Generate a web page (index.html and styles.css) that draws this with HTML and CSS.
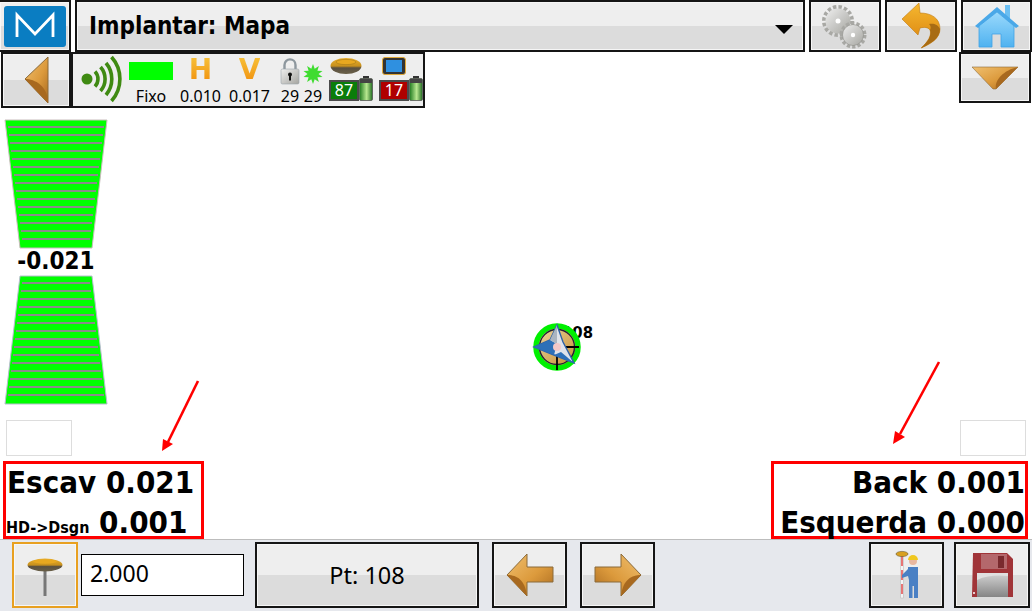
FILE: index.html
```html
<!DOCTYPE html>
<html lang="pt">
<head>
<meta charset="UTF-8">
<meta name="viewport" content="width=device-width, initial-scale=1.0">
<title>Implantar: Mapa</title>
<link rel="stylesheet" href="styles.css">
</head>
<body>

<!-- shared gradients -->
<svg class="defs" aria-hidden="true">
  <defs>
    <linearGradient id="gold" x1="0" y1="0" x2="1" y2="1">
      <stop offset="0" stop-color="#f0c070"/>
      <stop offset="0.55" stop-color="#dc9a3c"/>
      <stop offset="1" stop-color="#a8691f"/>
    </linearGradient>
    <linearGradient id="orange" x1="0" y1="0" x2="0" y2="1">
      <stop offset="0" stop-color="#f5b830"/>
      <stop offset="1" stop-color="#d97f0c"/>
    </linearGradient>
    <linearGradient id="sky" x1="0" y1="0" x2="0" y2="1">
      <stop offset="0" stop-color="#9ad9fc"/>
      <stop offset="1" stop-color="#4fb2f0"/>
    </linearGradient>
    <linearGradient id="steel" x1="0" y1="0" x2="1" y2="1">
      <stop offset="0" stop-color="#eeeeee"/>
      <stop offset="1" stop-color="#a5a5a0"/>
    </linearGradient>
    <linearGradient id="cell" x1="0" y1="0" x2="1" y2="0">
      <stop offset="0" stop-color="#1f7a1f"/>
      <stop offset="0.55" stop-color="#b8e890"/>
      <stop offset="1" stop-color="#1f6a1f"/>
    </linearGradient>
    <linearGradient id="dome" x1="0" y1="0" x2="0" y2="1">
      <stop offset="0" stop-color="#e8b030"/>
      <stop offset="0.5" stop-color="#c8901c"/>
      <stop offset="0.62" stop-color="#5a5040"/>
      <stop offset="1" stop-color="#6a6048"/>
    </linearGradient>
    <linearGradient id="face" x1="0" y1="0" x2="1" y2="1">
      <stop offset="0" stop-color="#f0d8a0"/>
      <stop offset="1" stop-color="#c08a30"/>
    </linearGradient>
    <linearGradient id="disk" x1="0" y1="0" x2="0" y2="1">
      <stop offset="0" stop-color="#d4d4d4"/>
      <stop offset="1" stop-color="#858585"/>
    </linearGradient>
    <g id="arrowShape">
      <path d="M1 22 L21 1 V14 H47 V29 H21 V43 Z" fill="url(#gold)" stroke="#8a6a3a"/>
      <path d="M1 22 C10 22 19 26 21 43 Z" fill="#a8691f"/>
    </g>
    <g id="gaugeRungs" stroke="#8a8a8a" stroke-width="2">
      <line x1="3" y1="7" x2="99" y2="7"/>
      <line x1="4" y1="15" x2="98" y2="15"/>
      <line x1="5" y1="23" x2="97" y2="23"/>
      <line x1="6" y1="31" x2="96" y2="31"/>
      <line x1="7" y1="39" x2="95" y2="39"/>
      <line x1="8" y1="47" x2="94" y2="47"/>
      <line x1="9" y1="55" x2="93" y2="55"/>
      <line x1="10" y1="63" x2="92" y2="63"/>
      <line x1="11" y1="71" x2="91" y2="71"/>
      <line x1="12" y1="79" x2="90" y2="79"/>
      <line x1="13" y1="87" x2="89" y2="87"/>
      <line x1="14" y1="95" x2="88" y2="95"/>
      <line x1="15" y1="103" x2="87" y2="103"/>
      <line x1="16" y1="111" x2="86" y2="111"/>
      <line x1="17" y1="119" x2="85" y2="119"/>
    </g>
    <g id="gaugeRungsLow" stroke="#8a8a8a" stroke-width="2">
      <line x1="17" y1="7" x2="85" y2="7"/>
      <line x1="16" y1="15" x2="86" y2="15"/>
      <line x1="15" y1="23" x2="87" y2="23"/>
      <line x1="14" y1="31" x2="88" y2="31"/>
      <line x1="13" y1="39" x2="89" y2="39"/>
      <line x1="12" y1="47" x2="90" y2="47"/>
      <line x1="11" y1="55" x2="91" y2="55"/>
      <line x1="10" y1="63" x2="92" y2="63"/>
      <line x1="9" y1="71" x2="93" y2="71"/>
      <line x1="8" y1="79" x2="94" y2="79"/>
      <line x1="7" y1="87" x2="95" y2="87"/>
      <line x1="6" y1="95" x2="96" y2="95"/>
      <line x1="5" y1="103" x2="97" y2="103"/>
      <line x1="4" y1="111" x2="98" y2="111"/>
      <line x1="3" y1="119" x2="99" y2="119"/>
    </g>
  </defs>
</svg>

<div class="app">

  <header class="top-row">
    <button class="btn btn-logo">
      <svg class="logo" width="62" height="41" viewBox="0 0 62 41">
        <rect width="62" height="41" rx="3" fill="#0a7dc2"/>
        <path d="M13 31 V9 L31 28 L49 9 V31" fill="none" stroke="#fff" stroke-width="2.8"/>
      </svg>
    </button>
    <div class="btn title-select">
      <span class="title-text">Implantar: Mapa</span>
      <span class="caret"></span>
    </div>
    <button class="btn btn-icon">
      <svg width="48" height="48" viewBox="0 0 48 48">
        <circle cx="17" cy="19" r="14" fill="none" stroke="#a8a8a4" stroke-width="4" stroke-dasharray="3.4 2.1"/>
        <circle cx="17" cy="19" r="12.5" fill="url(#steel)"/>
        <circle cx="17" cy="19" r="2.5" fill="#fff"/>
        <circle cx="32" cy="33" r="11.5" fill="none" stroke="#a8a8a4" stroke-width="4" stroke-dasharray="3.2 2"/>
        <circle cx="32" cy="33" r="10.5" fill="url(#steel)" stroke="#8d8d88" stroke-width="0.6"/>
        <circle cx="32" cy="33" r="2.2" fill="#fff"/>
      </svg>
    </button>
    <button class="btn btn-icon">
      <svg width="40" height="48" viewBox="0 0 40 48">
        <path d="M1 17 L18 1 L19 11 C30 11 39 16 39 27 C39 36 30 42 20 46 C27 40 31 33 29 28 C27 25 23 25 19 26 L17 33 Z" fill="url(#orange)" stroke="#c07a10" stroke-width="0.6"/>
        <path d="M29 28 C31 33 27 40 20 46 C30 42 39 36 39 27 C37 22 32 21 28 22 C30 24 30 26 29 28 Z" fill="#a86c14"/>
      </svg>
    </button>
    <button class="btn btn-icon btn-home">
      <svg width="44" height="44" viewBox="0 0 44 44">
        <path d="M30 1 H35 V16 H30 Z" fill="#6cbff2"/>
        <path d="M22 3 L44 22 L41 24 L22 8 L3 24 L0 22 Z" fill="#4aa8e8"/>
        <path d="M22 8 L39 22 V43 H26 V30 H17 V43 H4 V22 Z" fill="url(#sky)" stroke="#3fa2e6" stroke-width="0.8"/>
      </svg>
    </button>
  </header>

  <div class="status-row">
    <div class="status-left">
      <button class="btn btn-back">
        <svg width="26" height="48" viewBox="0 0 26 48">
          <path d="M2 23 L25 1 V47 Z" fill="url(#gold)" stroke="#8a6a3a"/>
          <path d="M2 23 C12 23 25 30 25 47 Z" fill="#a8691f"/>
        </svg>
      </button>
      <div class="status-bar">
        <svg class="signal" width="43" height="50" viewBox="0 0 43 50">
          <circle cx="7" cy="24" r="5.5" fill="#3f8a12"/>
          <g fill="none" stroke="#3f8a12" stroke-width="3.6">
            <path d="M15 16.5 A11 11 0 0 1 15 31.5"/>
            <path d="M20.5 12 A18 18 0 0 1 20.5 36"/>
            <path d="M26 8 A25 25 0 0 1 26 40"/>
            <path d="M31.5 2 A33 33 0 0 1 31.5 46"/>
          </g>
        </svg>
        <div class="stat stat-fix">
          <div class="stat-icon"><span class="fix-bar"></span></div>
          <span class="stat-label">Fixo</span>
        </div>
        <div class="stat stat-h">
          <div class="stat-icon"><span class="tol-letter">H</span></div>
          <span class="stat-label">0.010</span>
        </div>
        <div class="stat stat-v">
          <div class="stat-icon"><span class="tol-letter">V</span></div>
          <span class="stat-label">0.017</span>
        </div>
        <div class="stat stat-lock">
          <div class="stat-icon">
            <svg width="20" height="27" viewBox="0 0 20 27">
              <path d="M4.5 12 V7 C4.5 -0.5 15.5 -0.5 15.5 7 V12" fill="none" stroke="#8d979e" stroke-width="2.4"/>
              <rect x="1" y="11" width="18" height="15" rx="1.5" fill="url(#steel)" stroke="#9aa4ab" stroke-width="0.6"/>
              <circle cx="10" cy="16.5" r="2" fill="#111"/>
              <rect x="9" y="17" width="2" height="5.5" fill="#111"/>
            </svg>
          </div>
          <span class="stat-label">29</span>
        </div>
        <div class="stat stat-sat">
          <div class="stat-icon stat-icon-low">
            <svg width="20" height="20" viewBox="0 0 20 20">
              <polygon fill="#3fdc30" points="10,0 11.7,4.8 15.9,1.9 14.4,6.8 19.5,6.9 15.5,10 19.5,13.1 14.4,13.2 15.9,18.1 11.7,15.2 10,20 8.3,15.2 4.1,18.1 5.6,13.2 0.5,13.1 4.5,10 0.5,6.9 5.6,6.8 4.1,1.9 8.3,4.8"/>
            </svg>
          </div>
          <span class="stat-label">29</span>
        </div>

        <div class="power power-rover">
          <svg class="power-icon" width="32" height="18" viewBox="0 0 32 18">
            <ellipse cx="16" cy="9" rx="15.5" ry="8" fill="url(#dome)"/>
            <ellipse cx="16" cy="5" rx="10" ry="2.6" fill="#e8a820" stroke="#a87a18" stroke-width="0.6"/>
          </svg>
          <div class="power-row">
            <span class="badge badge-ok">87</span>
            <svg width="14" height="25" viewBox="0 0 14 25">
              <rect x="4" y="0" width="6" height="3" fill="#333"/>
              <rect x="0.5" y="2.5" width="13" height="22" rx="1.5" fill="url(#cell)" stroke="#555" stroke-width="0.8"/>
              <rect x="1" y="3" width="12" height="4" fill="#444"/>
            </svg>
          </div>
        </div>

        <div class="power power-tablet">
          <svg class="power-icon" width="24" height="18" viewBox="0 0 24 18">
            <rect x="0.5" y="0.5" width="23" height="17" rx="2.5" fill="#333" stroke="#e0a838"/>
            <rect x="4" y="3" width="16" height="12" fill="#2f90e0"/>
          </svg>
          <div class="power-row">
            <span class="badge badge-low">17</span>
            <svg width="14" height="25" viewBox="0 0 14 25">
              <rect x="4" y="0" width="6" height="3" fill="#333"/>
              <rect x="0.5" y="2.5" width="13" height="22" rx="1.5" fill="url(#cell)" stroke="#555" stroke-width="0.8"/>
              <rect x="1" y="3" width="12" height="4" fill="#444"/>
            </svg>
          </div>
        </div>
      </div>
    </div>
    <button class="btn btn-down">
      <svg width="46" height="24" viewBox="0 0 46 24">
        <path d="M0 1 H46 L24 23 H21 Z" fill="url(#gold)" stroke="#8a6a3a" stroke-width="0.6"/>
        <path d="M46 1 L24 23 C22 14 32 4 46 1 Z" fill="#a8691f"/>
      </svg>
    </button>
  </div>

  <main class="canvas">

    <section class="side side-left">
      <div class="gauge">
        <svg width="102" height="128" viewBox="0 0 102 128">
          <polygon points="0,0 102,0 87,128 15,128" fill="#00ff00" stroke="#c9bcbc"/>
          <use href="#gaugeRungs"/>
        </svg>
        <div class="gauge-value">-0.021</div>
        <svg width="102" height="128" viewBox="0 0 102 128">
          <polygon points="15,0 87,0 102,128 0,128" fill="#00ff00" stroke="#b9bcd0"/>
          <use href="#gaugeRungsLow"/>
        </svg>
      </div>
      <div class="empty-box"></div>
      <div class="readout readout-left">
        <div class="readout-line">Escav 0.021</div>
        <div class="readout-line readout-second"><span class="readout-small">HD-&gt;Dsgn</span> 0.001</div>
      </div>
    </section>

    <section class="side side-right">
      <div class="empty-box"></div>
      <div class="readout readout-right">
        <div class="readout-line">Back 0.001</div>
        <div class="readout-line readout-second">Esquerda 0.000</div>
      </div>
    </section>

    <!-- map objects and annotations -->
    <span class="point-label">108</span>
    <svg class="compass" width="50" height="50" viewBox="0 0 50 50">
      <circle cx="25" cy="25" r="21" fill="url(#face)" stroke="#00f000" stroke-width="5.5"/>
      <circle cx="25" cy="25" r="17.5" fill="none" stroke="#223" stroke-width="1.4"/>
      <path d="M25 10 V48 M10 25 H47" stroke="#000" stroke-width="1.8" fill="none"/>
      <path d="M25 3 L31 20 L42 41 L22 33 L2 25 L18 18 Z" fill="#dfe3ea" stroke="#2d62a8" stroke-width="1.4"/>
      <path d="M2 25 L18 18 L25 22 L22 33 Z" fill="#2d70b8"/>
      <path d="M42 41 L29 30 L22 33 Z" fill="#2d70b8"/>
      <path d="M25 3 L18 18 L25 22 Z" fill="#aab4c0"/>
      <circle cx="25" cy="25" r="4" fill="#f3c8c8"/>
    </svg>
    <svg class="red-arrow red-arrow-left" width="40" height="74" viewBox="0 0 40 74">
      <path d="M37 2 L7 63" stroke="#f00" stroke-width="2.6"/>
      <path d="M1 72 L2 60 L12 65 Z" fill="#f00"/>
    </svg>
    <svg class="red-arrow red-arrow-right" width="50" height="86" viewBox="0 0 50 86">
      <path d="M47 2 L8 74" stroke="#f00" stroke-width="2.6"/>
      <path d="M1 84 L3 71 L13 77 Z" fill="#f00"/>
    </svg>
  </main>

  <footer class="bottom-bar">
    <button class="btn btn-receiver">
      <svg class="receiver-icon" width="36" height="40" viewBox="0 0 36 40">
        <rect x="16.5" y="10" width="3" height="28" fill="#777"/>
        <ellipse cx="18" cy="7" rx="17.5" ry="6.5" fill="url(#dome)"/>
        <ellipse cx="18" cy="3.5" rx="12" ry="2.2" fill="#e8a820"/>
      </svg>
    </button>
    <input class="height-input" type="text" value="2.000">
    <button class="btn btn-point">Pt: 108</button>
    <button class="btn btn-step">
      <svg width="48" height="44" viewBox="0 0 48 44"><use href="#arrowShape"/></svg>
    </button>
    <button class="btn btn-step">
      <svg class="flip" width="48" height="44" viewBox="0 0 48 44"><use href="#arrowShape"/></svg>
    </button>
    <button class="btn btn-step btn-rod">
      <svg width="26" height="50" viewBox="0 0 26 50">
        <rect x="6.8" y="6" width="2.4" height="42" fill="#f4f4f4" stroke="#aaa" stroke-width="0.4"/>
        <path d="M8 6 V16 M8 20 V30 M8 34 V44" stroke="#e02020" stroke-width="1.2"/>
        <ellipse cx="8" cy="4" rx="6" ry="2.6" fill="#d8a020" stroke="#6a5a30" stroke-width="0.6"/>
        <circle cx="19" cy="11" r="4" fill="#e8b8a0"/>
        <path d="M14 10 A5 5 0 0 1 24 10 Z" fill="#f0c820"/>
        <path d="M14 17 H24 V48 H20 V36 H18.5 V48 H15 V30 L14 26 L8 28 V25 L14 19 Z" fill="#4a80c4"/>
      </svg>
    </button>
    <button class="btn btn-step">
      <svg width="42" height="44" viewBox="0 0 42 44">
        <path d="M2 0 H36 L42 6 V44 H1 Z" fill="#a03438"/>
        <rect x="10" y="1" width="26" height="15" fill="#b4686c"/>
        <rect x="27" y="3" width="6" height="12" fill="#7a2a2e"/>
        <rect x="6" y="20" width="31" height="24" fill="url(#disk)"/>
        <path d="M6 27 C16 22 28 22 37 23 V20 H6 Z" fill="#e0e0e0"/>
        <circle cx="3" cy="40" r="1" fill="#fff"/>
      </svg>
    </button>
  </footer>

</div>

</body>
</html>
```

FILE: styles.css
```css
body {
  margin: 0;
  background: #fff;
  color: #000;
  font-family: "Noto Sans", sans-serif;
  overflow: hidden;
}
.defs { display: block; width: 0; height: 0; }
.app { width: 1032px; height: 611px; display: flex; flex-direction: column; }

/* Buttons */
.btn {
  box-sizing: border-box;
  display: flex;
  align-items: center;
  justify-content: center;
  padding: 0;
  border: 2px solid #151515;
  box-shadow: inset 0 0 0 1px #f6f6f6;
  background: linear-gradient(#eeeeee 50%, #dcdcdc 50%);
  font-family: inherit;
  color: #000;
}

/* Top row */
.top-row { height: 52px; display: flex; gap: 4px; }
.btn-logo { width: 71px; border-left: none; }
.logo { display: block; }
.title-select { flex: 1; justify-content: space-between; padding: 0 10px 0 12px; }
.title-text { font: bold 24px "DejaVu Sans Condensed", "DejaVu Sans", sans-serif; }
.caret {
  margin-top: 6px;
  border-left: 9px solid transparent;
  border-right: 9px solid transparent;
  border-top: 9px solid #000;
}
.btn-icon { width: 72px; }
.btn-home { width: 71px; }

/* Status row */
.status-row { height: 56px; display: flex; justify-content: space-between; align-items: flex-start; }
.status-left { display: flex; margin-left: 1px; }
.btn-back { width: 70px; height: 56px; }
.btn-down { width: 72px; height: 51px; margin-right: 1px; }
.status-bar {
  box-sizing: border-box;
  width: 354px;
  height: 56px;
  display: flex;
  align-items: flex-start;
  padding: 1px 0 0 7px;
  border: 2px solid #151515;
  background: #eeeeee;
}
.stat { display: flex; flex-direction: column; align-items: center; }
.stat-icon { box-sizing: border-box; height: 32px; display: flex; align-items: center; justify-content: center; }
.stat-icon-low { align-items: flex-end; padding-bottom: 3px; }
.stat-label { font-size: 16px; line-height: 18px; white-space: nowrap; }
.stat-fix { width: 44px; margin-left: 6px; }
.stat-h { width: 41px; margin-left: 7px; }
.stat-v { width: 41px; margin-left: 8px; }
.stat-lock { width: 20px; margin-left: 10px; }
.stat-sat { width: 20px; margin-left: 3px; }
.fix-bar { display: block; width: 44px; height: 18px; background: #00ff00; }
.tol-letter {
  margin-top: -3px;
  font: bold 28px "DejaVu Sans", sans-serif;
  background: linear-gradient(#f8c840, #f08a08);
  -webkit-background-clip: text;
  background-clip: text;
  color: transparent;
}
.power { width: 44px; display: flex; flex-direction: column; }
.power-rover { margin-left: 6px; }
.power-tablet { margin-left: 6px; }
.power-icon { display: block; margin-top: 2px; }
.power-rover .power-icon { margin-left: 1px; }
.power-tablet .power-icon { margin-left: 3px; }
.power-row { display: flex; align-items: flex-end; margin-top: 1px; }
.power-row svg { display: block; }
.badge {
  box-sizing: border-box;
  width: 30px;
  height: 21px;
  border: 2px solid #4a4a4a;
  color: #fff;
  font-size: 16px;
  line-height: 17px;
  text-align: center;
}
.badge-ok { background: #0a7d0a; }
.badge-low { background: #b00000; }

/* Canvas */
.canvas { flex: 1; position: relative; display: flex; justify-content: space-between; }
.side { display: flex; flex-direction: column; padding-top: 12px; }
.side-right { align-items: flex-end; justify-content: flex-end; }
.gauge { margin-left: 5px; width: 102px; }
.gauge svg { display: block; overflow: visible; }
.gauge-value {
  height: 28px;
  font: bold 24px/27px "DejaVu Sans Condensed", "DejaVu Sans", sans-serif;
  text-align: center;
}
.empty-box {
  box-sizing: border-box;
  width: 66px;
  height: 36px;
  border: 1px solid #dddddd;
  background: #fff;
}
.side-left .empty-box { margin: 16px 0 0 6px; }
.side-right .empty-box { margin-right: 6px; }
.readout {
  box-sizing: border-box;
  height: 78px;
  margin-top: 5px;
  border: 3px solid #f00;
  font: bold 31px/36px "DejaVu Sans Condensed", "DejaVu Sans", sans-serif;
  white-space: nowrap;
}
.readout-left { width: 201px; margin-left: 3px; padding-left: 1px; }
.readout-right { width: 257px; margin-right: 4px; text-align: right; }
.readout-second { padding-top: 4px; }
.readout-small { font-size: 16px; margin-left: -1px; }

.point-label {
  position: absolute;
  left: 562px;
  top: 215px;
  font: bold 16.5px/20px "DejaVu Sans Condensed", "DejaVu Sans", sans-serif;
}
.compass { position: absolute; left: 532px; top: 214px; }
.red-arrow { position: absolute; }
.red-arrow-left { left: 161px; top: 271px; }
.red-arrow-right { left: 892px; top: 252px; }

/* Bottom bar */
.bottom-bar {
  box-sizing: border-box;
  height: 72px;
  display: flex;
  align-items: flex-start;
  padding: 2px 2px 0 12px;
  background: #e6e8ed;
  border-top: 1px solid #bdbdbd;
}
.btn-receiver { width: 66px; height: 66px; border-color: #e8a020; }
.receiver-icon { margin-top: 6px; }
.height-input {
  box-sizing: border-box;
  width: 163px;
  height: 42px;
  margin: 12px 0 0 3px;
  padding: 0 0 4px 8px;
  border: 1px solid #000;
  font: 23px "Noto Sans", sans-serif;
  background: #fff;
}
.btn-point { width: 224px; height: 66px; margin-left: 11px; font-size: 23.5px; }
.btn-step { width: 75px; height: 66px; margin-left: 13px; }
.btn-rod { margin-left: auto; }
.btn-rod + .btn-step { margin-left: 10px; width: 76px; }
.flip { transform: scaleX(-1); }
```
